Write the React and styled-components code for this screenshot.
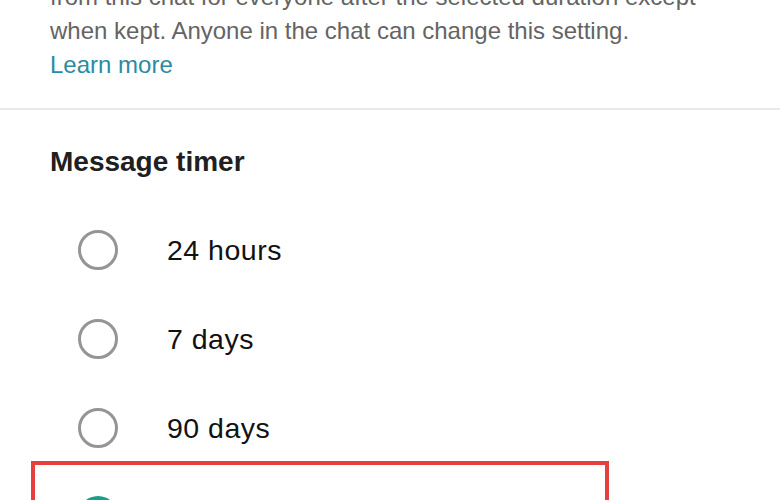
import React from "react";
import styled, { createGlobalStyle } from "styled-components";

const Global = createGlobalStyle`
  html, body { margin: 0; padding: 0; background: #ffffff; }
  body { overflow: hidden; }
  #root { width: 780px; height: 500px; overflow: hidden; }
`;

const Page = styled.div`
  width: 780px;
  height: 500px;
  overflow: hidden;
  background: #ffffff;
  font-family: "Liberation Sans", Arial, Helvetica, sans-serif;
  display: flex;
  flex-direction: column;
`;

const InfoSection = styled.section`
  margin-top: -20px;
  padding: 0 50px 26px 50px;
  border-bottom: 2px solid #e9e9e9;
`;

const Description = styled.p`
  margin: 0;
  font-size: 24px;
  line-height: 34px;
  color: #646464;
`;

const LearnMore = styled.a`
  display: block;
  font-size: 24px;
  line-height: 34px;
  color: #2a8ba2;
  text-decoration: none;
`;

const TimerSection = styled.section`
  padding-top: 35px;
  display: flex;
  flex-direction: column;
`;

const Title = styled.h2`
  margin: 0 0 26px 50px;
  font-size: 28px;
  line-height: 34px;
  font-weight: 700;
  color: #202020;
`;

const OptionList = styled.div`
  display: flex;
  flex-direction: column;
`;

const Row = styled.div`
  height: 89px;
  display: flex;
  align-items: center;
  gap: 49px;
  padding-left: ${(p) => p.$inset}px;
`;

const Radio = styled.span`
  box-sizing: border-box;
  flex: none;
  width: 40px;
  height: 40px;
  border-radius: 50%;
  border: ${(p) => (p.$checked ? "none" : "3px solid #959595")};
  background: ${(p) => (p.$checked ? "#1b9f86" : "transparent")};
  display: flex;
  align-items: center;
  justify-content: center;
`;

const Label = styled.span`
  font-size: 28.5px;
  letter-spacing: 0.5px;
  color: #121212;
  transform: translateY(1px);
`;

const Highlight = styled.div`
  margin: -11px 171px 0 31px;
  border: 4px solid #e5403d;
  padding-top: 6px;
`;

const options = ["24 hours", "7 days", "90 days"];

export default function App() {
  return (
    <>
      <Global />
      <Page>
        <InfoSection>
          <Description>
            from this chat for everyone after the selected duration except when kept. Anyone in the chat can change this setting.
          </Description>
          <LearnMore href="#">Learn more</LearnMore>
        </InfoSection>
        <TimerSection>
          <Title>Message timer</Title>
          <OptionList>
            {options.map((o) => (
              <Row key={o} $inset={78}>
                <Radio />
                <Label>{o}</Label>
              </Row>
            ))}
            <Highlight>
              <Row $inset={43}>
                <Radio $checked>
                  <svg width="22" height="22" viewBox="0 0 24 24" fill="none">
                    <path d="M5 12.5l4.5 4.5L19 7.5" stroke="#fff" strokeWidth="3" strokeLinecap="round" strokeLinejoin="round" />
                  </svg>
                </Radio>
                <Label>Off</Label>
              </Row>
            </Highlight>
          </OptionList>
        </TimerSection>
      </Page>
    </>
  );
}
